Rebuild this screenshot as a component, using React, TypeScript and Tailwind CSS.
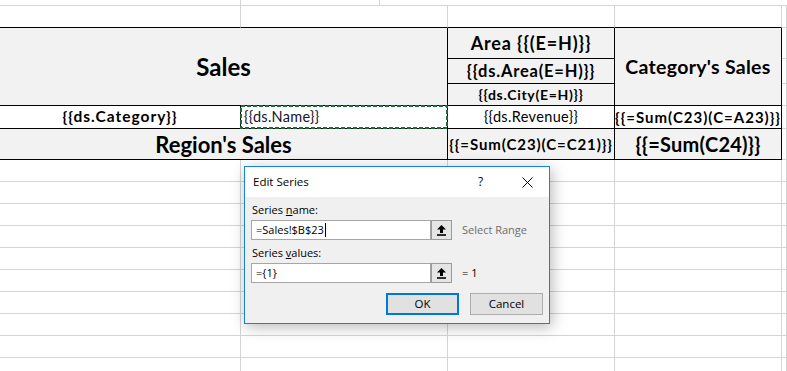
import React from 'react';

const cellFont = "font-['Lato',sans-serif]";
const uiFont = "font-['Open_Sans',sans-serif]";

// plain spreadsheet cell with light gridlines
function GridCell({ className = '' }: { className?: string }) {
  return <div className={`border-r border-b border-r-[#d4d4d4] border-b-[#d4d4d4] ${className}`} />;
}

function UploadIcon() {
  return (
    <svg width="9" height="11" viewBox="0 0 9 11" fill="#000">
      <polygon points="4.5,0 9,4.5 6,4.5 6,8 3,8 3,4.5 0,4.5" />
      <rect x="0" y="9.2" width="9" height="1.6" />
    </svg>
  );
}

function RangeInput({ value, cursor }: { value: string; cursor?: boolean }) {
  return (
    <div className="flex h-[20px]">
      <div className="w-[180px] h-full bg-white border border-[#a6a6a6] flex items-center pl-[4px] text-[11px] text-black">
        <span>{value}</span>
        {cursor ? <span className="w-px h-[14px] bg-black ml-[1px]" /> : null}
      </div>
      <button className="w-[21px] h-full border border-[#9a9a9a] bg-[#e5e5e5] flex items-center justify-center">
        <UploadIcon />
      </button>
    </div>
  );
}

// marching-ants marquee around the copied cell
function CopyMarquee() {
  return (
    <svg className="absolute -left-px -top-px z-10 w-[209px] h-[25px]" width="209" height="25" viewBox="0 0 209 25">
      <rect x="1" y="1" width="206" height="22" fill="none" stroke="#1a6b3c" strokeWidth="2" strokeDasharray="4 2" />
    </svg>
  );
}

function EditSeriesDialog() {
  return (
    <div className={`absolute z-20 left-[244px] top-[166px] w-[306px] h-[158px] border border-[#1883d7] bg-[#f0f0f0] shadow-[2px_3px_14px_rgba(0,0,0,0.28)] flex flex-col ${uiFont}`}>
      {/* title bar */}
      <div className="h-[30px] bg-white flex items-center pl-[8px] pr-[16px] text-[11.5px] text-black">
        <span className="flex-1">Edit Series</span>
        <span className="w-[8px] mr-[36px] text-[12px]">?</span>
        <svg width="11" height="11" viewBox="0 0 11 11" stroke="#000" strokeWidth="1">
          <line x1="0.5" y1="0.5" x2="10.5" y2="10.5" />
          <line x1="10.5" y1="0.5" x2="0.5" y2="10.5" />
        </svg>
      </div>
      {/* body */}
      <div className="flex-1 flex flex-col pl-[6px] pt-[5px] pr-[6px] text-[11px] text-black">
        <div className="h-[16px] leading-[16px] pl-[1px]">
          Series <span className="underline">n</span>ame:
        </div>
        <div className="mt-[2px] flex items-center">
          <RangeInput value="=Sales!$B$23" cursor />
          <span className="ml-[10px] text-[#6d6d6d]">Select Range</span>
        </div>
        <div className="mt-[5px] h-[16px] leading-[16px] pl-[1px]">
          Series <span className="underline">v</span>alues:
        </div>
        <div className="mt-[2px] flex items-center">
          <RangeInput value="={1}" />
          <span className="ml-[10px]">= 1</span>
        </div>
        <div className="mt-[10px] flex justify-end gap-[11px]">
          <button className="w-[73px] h-[22px] border-2 border-[#0078d7] bg-[#e1e1e1] text-[11.5px]">OK</button>
          <button className="w-[73px] h-[22px] border border-[#adadad] bg-[#e1e1e1] text-[11.5px]">Cancel</button>
        </div>
      </div>
    </div>
  );
}

export default function App() {
  const head = 'bg-[#f2f2f2] border-r border-b border-r-black border-b-black flex items-center justify-center font-bold text-black whitespace-nowrap';
  const plainRows = Array.from({ length: 10 });

  return (
    <div className={`relative w-[787px] h-[371px] overflow-hidden bg-white ${cellFont}`}>
      {/* partial row peeking from the top */}
      <div className="flex h-[6px]">
        <div className="w-[241px] border-r border-b border-[#d4d4d4]" />
        <div className="w-[139px] border-r border-b border-[#d4d4d4]" />
        <div className="flex-1 border-b border-[#d4d4d4]" />
      </div>

      <div className="grid grid-cols-[241px_207px_167px_167px_1fr] grid-rows-[22px_31px_25px_22px_23px_31px_repeat(10,22px)]">
        {/* blank row above the table */}
        <div className="border-r border-b border-r-[#d4d4d4] border-b-black" />
        <div className="border-r border-b border-r-[#d4d4d4] border-b-black" />
        <div className="border-r border-b border-r-[#d4d4d4] border-b-black" />
        <div className="border-r border-b border-r-[#d4d4d4] border-b-black" />
        <GridCell />

        {/* header block */}
        <div className={`${head} col-span-2 row-span-3 text-[24px]`}>Sales</div>
        <div className={`${head} text-[18px] tracking-[0.85px]`}>Area {'{{(E=H)}}'}</div>
        <div className={`${head} row-span-3 text-[19.5px] tracking-[0.3px]`}>Category's Sales</div>
        <GridCell />
        <div className={`${head} text-[16.5px] tracking-[0.8px]`}>{'{{ds.Area(E=H)}}'}</div>
        <GridCell />
        <div className={`${head} text-[14px] tracking-[0.7px]`}>{'{{ds.City(E=H)}}'}</div>
        <GridCell />

        {/* data row */}
        <div className="border-r border-b border-black flex items-center justify-center font-bold text-[15.5px] tracking-[1px] text-black">
          {'{{ds.Category}}'}
        </div>
        <div className="relative border-r border-b border-black flex items-center pl-[3px] text-[14.5px] tracking-[0.3px] text-[#14142a]">
          {'{{ds.Name}}'}
          <CopyMarquee />
        </div>
        <div className="border-r border-b border-black flex items-center justify-center text-[14.5px] tracking-[0.35px] text-black">
          {'{{ds.Revenue}}'}
        </div>
        <div className="border-r border-b border-black flex items-center justify-center font-bold text-[15px] tracking-[1px] text-black whitespace-nowrap">
          {'{{=Sum(C23)(C=A23)}}'}
        </div>
        <GridCell />

        {/* totals row */}
        <div className={`${head} col-span-2 text-[22px]`}>Region's Sales</div>
        <div className={`${head} text-[15px] tracking-[0.9px]`}>{'{{=Sum(C23)(C=C21)}}'}</div>
        <div className={`${head} text-[20px] tracking-[0.25px]`}>{'{{=Sum(C24)}}'}</div>
        <GridCell />

        {plainRows.map((_, i) => (
          <React.Fragment key={i}>
            <GridCell />
            <GridCell />
            <GridCell />
            <GridCell />
            <GridCell />
          </React.Fragment>
        ))}
      </div>

      <EditSeriesDialog />
    </div>
  );
}
